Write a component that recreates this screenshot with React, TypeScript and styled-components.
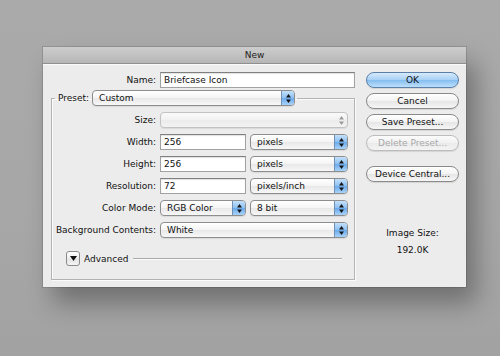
import React from "react";
import styled, { createGlobalStyle } from "styled-components";

const GlobalStyle = createGlobalStyle`
  html, body {
    margin: 0;
    padding: 0;
  }
  body {
    background: #a6a6a6;
    font-family: "DejaVu Sans", "Liberation Sans", sans-serif;
    font-size: 9px;
    color: #111;
  }
`;

type Variant = "default" | "primary" | "disabled";

const Arrows = ({ disabled }: { disabled?: boolean }) => (
  <svg width="5" height="9" viewBox="0 0 5 9" aria-hidden>
    <polygon points="0,3.5 2.5,0 5,3.5" fill={disabled ? "#9a9a9a" : "#151515"} />
    <polygon points="0,5.5 5,5.5 2.5,9" fill={disabled ? "#9a9a9a" : "#151515"} />
  </svg>
);

const PopUpButton = ({
  width,
  value,
  disabled,
}: {
  width: number;
  value?: string;
  disabled?: boolean;
}) => (
  <PopUp $width={width} $disabled={disabled}>
    <PopUpText>{value}</PopUpText>
    <Stepper $disabled={disabled}>
      <Arrows disabled={disabled} />
    </Stepper>
  </PopUp>
);

const FormRow = ({ label, children }: { label: string; children: React.ReactNode }) => (
  <Row>
    <Label>{label}</Label>
    {children}
  </Row>
);

export default function App() {
  return (
    <Page>
      <GlobalStyle />
      <Dialog>
        <TitleBar>New</TitleBar>
        <Body>
          <LeftColumn>
            <FormRow label="Name:">
              <TextField $width={195}>Briefcase Icon</TextField>
            </FormRow>
            <Group>
              <Legend>
                <LegendLabel>Preset:</LegendLabel>
                <PopUpButton width={203} value="Custom" />
              </Legend>
              <Rows>
                <FormRow label="Size:">
                  <PopUpButton width={188} disabled />
                </FormRow>
                <FormRow label="Width:">
                  <TextField $width={86}>256</TextField>
                  <PopUpButton width={98} value="pixels" />
                </FormRow>
                <FormRow label="Height:">
                  <TextField $width={86}>256</TextField>
                  <PopUpButton width={98} value="pixels" />
                </FormRow>
                <FormRow label="Resolution:">
                  <TextField $width={86}>72</TextField>
                  <PopUpButton width={98} value="pixels/inch" />
                </FormRow>
                <FormRow label="Color Mode:">
                  <PopUpButton width={86} value="RGB Color" />
                  <PopUpButton width={98} value="8 bit" />
                </FormRow>
                <FormRow label="Background Contents:">
                  <PopUpButton width={188} value="White" />
                </FormRow>
              </Rows>
              <AdvancedRow>
                <Disclosure>
                  <svg width="7" height="5" viewBox="0 0 7 5" aria-hidden>
                    <polygon points="0,0 7,0 3.5,5" fill="#111" />
                  </svg>
                </Disclosure>
                <span>Advanced</span>
                <Rule />
              </AdvancedRow>
            </Group>
          </LeftColumn>
          <RightColumn>
            <PushButton $variant="primary">OK</PushButton>
            <PushButton>Cancel</PushButton>
            <PushButton>Save Preset...</PushButton>
            <PushButton $variant="disabled">Delete Preset...</PushButton>
            <PushButton $spaced>Device Central...</PushButton>
            <InfoLabel>Image Size:</InfoLabel>
            <InfoValue>192.0K</InfoValue>
          </RightColumn>
        </Body>
      </Dialog>
    </Page>
  );
}

const Page = styled.div`
  width: 500px;
  height: 356px;
  box-sizing: border-box;
  padding: 47px 0 0 43px;
  overflow: hidden;
  background: linear-gradient(#aaaaaa, #a7a7a7 60%, #a2a2a2);
`;

const Dialog = styled.div`
  width: 423px;
  height: 240px;
  display: flex;
  flex-direction: column;
  background: #ececec;
  box-shadow: 10px 16px 24px rgba(0, 0, 0, 0.32), 0 0 0 1px rgba(0, 0, 0, 0.12);
`;

const TitleBar = styled.div`
  height: 17px;
  box-sizing: border-box;
  display: flex;
  align-items: center;
  justify-content: center;
  background: linear-gradient(#cdcdcd, #b6b6b6);
  border-bottom: 1px solid #8f8f8f;
  color: #222;
`;

const Body = styled.div`
  flex: 1;
  display: flex;
  gap: 11px;
  padding: 7px 7px 7px 8px;
  border-top: 1px solid #fafafa;
`;

const LeftColumn = styled.div`
  width: 304px;
  flex-shrink: 0;
  display: flex;
  flex-direction: column;
  gap: 2px;
`;

const Row = styled.div`
  display: flex;
  align-items: center;
  height: 16px;
  gap: 4px;
`;

const Label = styled.span`
  width: 105px;
  flex-shrink: 0;
  text-align: right;
  white-space: nowrap;
`;

const TextField = styled.div<{ $width: number }>`
  width: ${({ $width }) => $width}px;
  flex-shrink: 0;
  height: 16px;
  box-sizing: border-box;
  padding: 0 3px;
  display: flex;
  align-items: center;
  background: #fff;
  border: 1px solid #a2a2a2;
  border-top-color: #7f7f7f;
  box-shadow: inset 0 1px 1px rgba(0, 0, 0, 0.12);
`;

const PopUp = styled.div<{ $width: number; $disabled?: boolean }>`
  width: ${({ $width }) => $width}px;
  flex-shrink: 0;
  height: 16px;
  box-sizing: border-box;
  display: flex;
  align-items: stretch;
  overflow: hidden;
  border: 1px solid ${({ $disabled }) => ($disabled ? "#c2c2c2" : "#8d8d8d")};
  border-radius: 4px;
  background: ${({ $disabled }) =>
    $disabled
      ? "linear-gradient(#fafafa, #f1f1f1 50%, #ebebeb 51%, #f3f3f3)"
      : "linear-gradient(#ffffff, #f4f4f4 50%, #e8e8e8 51%, #f7f7f7)"};
  box-shadow: 0 1px 1px rgba(0, 0, 0, 0.08);
`;

const PopUpText = styled.span`
  flex: 1;
  display: flex;
  align-items: center;
  padding-left: 6px;
  white-space: nowrap;
`;

const Stepper = styled.span<{ $disabled?: boolean }>`
  width: 12px;
  display: flex;
  align-items: center;
  justify-content: center;
  border-left: 1px solid ${({ $disabled }) => ($disabled ? "transparent" : "#6f8fb5")};
  background: ${({ $disabled }) =>
    $disabled
      ? "transparent"
      : "linear-gradient(#c4e0fa, #8cc0f2 50%, #6aa9ec 51%, #a8d2f8)"};
`;

const Group = styled.fieldset`
  width: 304px;
  box-sizing: border-box;
  margin: 0;
  padding: 6px 0 13px 0;
  border: 1px solid #b3b3b3;
  box-shadow: inset 1px 1px 0 #fbfbfb, 1px 1px 0 #fbfbfb;
  min-width: 0;
`;

const Legend = styled.legend`
  display: flex;
  align-items: center;
  gap: 3px;
  height: 16px;
  margin-left: 3px;
  padding: 0 2px 0 3px;
`;

const LegendLabel = styled.span`
  white-space: nowrap;
`;

const Rows = styled.div`
  display: flex;
  flex-direction: column;
  gap: 6px;
  margin-left: -1px;
`;

const AdvancedRow = styled.div`
  display: flex;
  align-items: center;
  height: 15px;
  margin-top: 13px;
  padding: 0 12px 0 14px;
  gap: 4px;
`;

const Disclosure = styled.span`
  width: 14px;
  height: 15px;
  box-sizing: border-box;
  display: flex;
  align-items: center;
  justify-content: center;
  border: 1px solid #8a8a8a;
  border-radius: 3px;
  background: linear-gradient(#ffffff, #ececec 50%, #e2e2e2 51%, #f4f4f4);
`;

const Rule = styled.span`
  flex: 1;
  margin-left: 1px;
  height: 1px;
  background: #a9a9a9;
  box-shadow: 0 1px 0 #fbfbfb;
`;

const RightColumn = styled.div`
  width: 93px;
  display: flex;
  flex-direction: column;
  align-items: center;
  gap: 5px;
`;

const PushButton = styled.div<{ $variant?: Variant; $spaced?: boolean }>`
  width: 93px;
  height: 16px;
  box-sizing: border-box;
  display: flex;
  align-items: center;
  justify-content: center;
  white-space: nowrap;
  border-radius: 8px;
  margin-top: ${({ $spaced }) => ($spaced ? "10px" : "0")};
  border: 1px solid
    ${({ $variant }) =>
      $variant === "primary" ? "#5b7fa9" : $variant === "disabled" ? "#bcbcbc" : "#8a8a8a"};
  color: ${({ $variant }) => ($variant === "disabled" ? "#a8a8a8" : "#111")};
  background: ${({ $variant }) =>
    $variant === "primary"
      ? "linear-gradient(#d6eafc, #a6d0f6 50%, #84bdf0 51%, #bde0fb)"
      : $variant === "disabled"
      ? "linear-gradient(#fbfbfb, #f1f1f1 50%, #eaeaea 51%, #f4f4f4)"
      : "linear-gradient(#ffffff, #f3f3f3 50%, #e6e6e6 51%, #f6f6f6)"};
  box-shadow: 0 1px 1px rgba(0, 0, 0, 0.1);
`;

const InfoLabel = styled.div`
  margin-top: 40px;
  line-height: 13px;
`;

const InfoValue = styled.div`
  margin-top: -1px;
  line-height: 13px;
`;
